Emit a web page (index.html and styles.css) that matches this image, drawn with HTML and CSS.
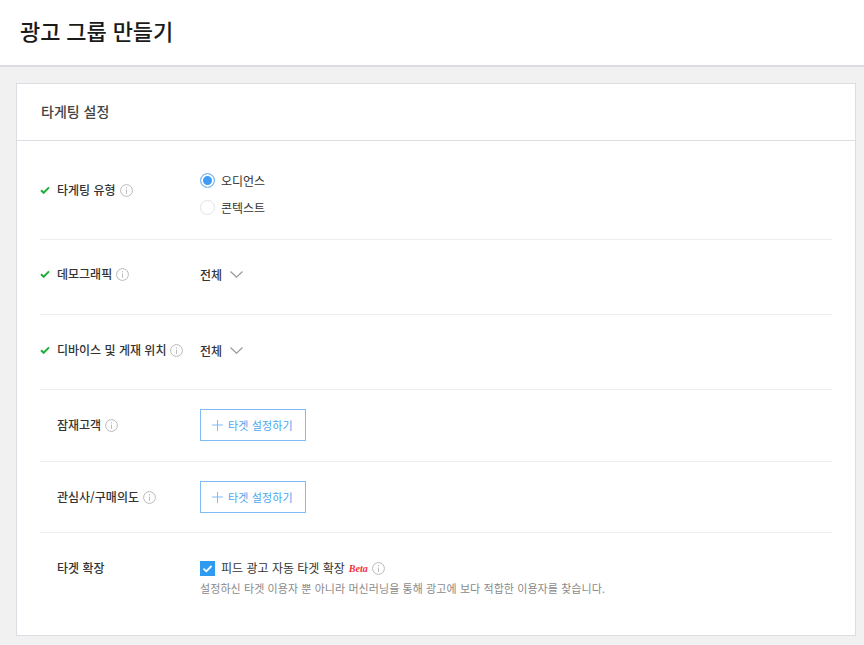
FILE: index.html
```html
<!DOCTYPE html>
<html lang="ko">
<head>
<meta charset="utf-8">
<title>광고 그룹 만들기</title>
<link rel="stylesheet" href="styles.css">
</head>
<body>
<header class="page-head"><h1 class="page-title">광고 그룹 만들기</h1></header>
<main class="content">
  <section class="card">
    <h2 class="card-title">타게팅 설정</h2>
    <div class="rows">
      <div class="row row-type">
        <div class="label">
          <svg class="check" viewBox="0 0 10 8"><path d="M1 4.200 3.700 6.800 9 1.400" /></svg>
          <span>타게팅 유형</span>
          <svg class="info" viewBox="0 0 13 13"><circle cx="6.500" cy="6.500" r="5.900"/><path d="M6.500 5.600v4.200M6.500 3.200v1.200"/></svg>
        </div>
        <div class="value radios">
          <div class="radio-line"><span class="radio on"></span><span>오디언스</span></div>
          <div class="radio-line"><span class="radio"></span><span>콘텍스트</span></div>
        </div>
      </div>
      <div class="row row-demo row-demo-a">
        <div class="label">
          <svg class="check" viewBox="0 0 10 8"><path d="M1 4.200 3.700 6.800 9 1.400" /></svg>
          <span>데모그래픽</span>
          <svg class="info" viewBox="0 0 13 13"><circle cx="6.500" cy="6.500" r="5.900"/><path d="M6.500 5.600v4.200M6.500 3.200v1.200"/></svg>
        </div>
        <div class="value select"><span>전체</span><svg class="chev" viewBox="0 0 13 7"><path d="M.5.5 6.500 6.200 12.500.5"/></svg></div>
      </div>
      <div class="row row-demo">
        <div class="label">
          <svg class="check" viewBox="0 0 10 8"><path d="M1 4.200 3.700 6.800 9 1.400" /></svg>
          <span>디바이스 및 게재 위치</span>
          <svg class="info" viewBox="0 0 13 13"><circle cx="6.500" cy="6.500" r="5.900"/><path d="M6.500 5.600v4.200M6.500 3.200v1.200"/></svg>
        </div>
        <div class="value select"><span>전체</span><svg class="chev" viewBox="0 0 13 7"><path d="M.5.5 6.500 6.200 12.500.5"/></svg></div>
      </div>
      <div class="row row-target">
        <div class="label indent">
          <span>잠재고객</span>
          <svg class="info" viewBox="0 0 13 13"><circle cx="6.500" cy="6.500" r="5.900"/><path d="M6.500 5.600v4.200M6.500 3.200v1.200"/></svg>
        </div>
        <div class="value"><button class="add-btn" type="button"><svg class="plus" viewBox="0 0 11 11"><path d="M5.500 0v11M0 5h11"/></svg>타겟 설정하기</button></div>
      </div>
      <div class="row row-target">
        <div class="label indent">
          <span>관심사/구매의도</span>
          <svg class="info" viewBox="0 0 13 13"><circle cx="6.500" cy="6.500" r="5.900"/><path d="M6.500 5.600v4.200M6.500 3.200v1.200"/></svg>
        </div>
        <div class="value"><button class="add-btn" type="button"><svg class="plus" viewBox="0 0 11 11"><path d="M5.500 0v11M0 5h11"/></svg>타겟 설정하기</button></div>
      </div>
      <div class="row row-expand">
        <div class="label indent"><span>타겟 확장</span></div>
        <div class="value">
          <div class="check-line">
            <span class="checkbox"><svg viewBox="0 0 15 15"><path d="M3.500 7.700 6.300 10.300 11.500 5"/></svg></span>
            <span>피드 광고 자동 타겟 확장</span>
            <span class="beta">Beta</span>
            <svg class="info" viewBox="0 0 13 13"><circle cx="6.500" cy="6.500" r="5.900"/><path d="M6.500 5.600v4.200M6.500 3.200v1.200"/></svg>
          </div>
          <p class="help">설정하신 타겟 이용자 뿐 아니라 머신러닝을 통해 광고에 보다 적합한 이용자를 찾습니다.</p>
        </div>
      </div>
    </div>
  </section>
</main>
</body>
</html>
```
FILE: styles.css
```css
* { box-sizing: border-box; }
html, body { margin: 0; padding: 0; }
body {
  background: #f1f1f1;
  font-family: "Noto Sans CJK KR", "Noto Sans", sans-serif;
  color: #333;
  height: 645px;
  overflow: hidden;
}
.page-head {
  height: 67px;
  background: #fff;
  border-bottom: 2px solid #dcdde2;
  padding: 14px 0 0 20px;
}
.page-title {
  margin: 0;
  font-size: 22px;
  letter-spacing: -0.1px;
  line-height: 32px;
  font-weight: 500;
  color: #1a1a1a;
}
.content { padding: 16px 8px 0 16px; }
.card {
  background: #fff;
  border: 1px solid #dcdde2;
  height: 553px;
}
.card-title {
  margin: 0;
  height: 57px;
  padding: 0 0 0 24px;
  border-bottom: 1px solid #dcdde2;
  font-size: 14px;
  line-height: 55px;
  font-weight: 500;
  color: #444;
}
.rows { padding: 0 23px; }
.row {
  display: flex;
  border-bottom: 1px solid #eeeeee;
  font-size: 12px;
  color: #333;
}
.row-type { height: 99px; padding-top: 29px; }
.row-demo { height: 75px; padding-top: 15px; }
.row-demo-a { padding-top: 14px; }
.row-target { height: 72px; padding-top: 19px; }
.row-target + .row-target { height: 71px; }
.row-expand { border-bottom: 0; padding-top: 25px; }
.label {
  width: 160px;
  display: flex;
  align-items: center;
  height: 40px;
  font-weight: 500;
  line-height: 18px;
}
.row-target .label { height: 32px; }
.row-expand .label { height: 20px; }
.label.indent { padding-left: 17px; }
.check {
  width: 10px;
  height: 8px;
  margin-right: 7px;
  flex: none;
  fill: none;
  stroke: #1fae3c;
  stroke-width: 2;
}
.info {
  width: 13px;
  height: 13px;
  margin-left: 4px;
  flex: none;
  fill: none;
  stroke: #b9b9b9;
  stroke-width: 1;
}
.radio-line {
  display: flex;
  align-items: center;
  gap: 6px;
  height: 27px;
  line-height: 18px;
}
.radios { margin-top: -3px; }
.radio {
  width: 15px;
  height: 15px;
  border-radius: 50%;
  border: 1px solid #e2e2e2;
  background: #fff;
  flex: none;
}
.radio.on {
  border: 1px solid #7fbcf6;
  background: #3f9bf5;
  box-shadow: inset 0 0 0 2px #fff;
}
.select {
  display: flex;
  align-items: center;
  height: 40px;
  gap: 8px;
  font-weight: 500;
}
.chev {
  width: 13px;
  height: 7px;
  margin-top: 1px;
  fill: none;
  stroke: #999;
  stroke-width: 1.2;
}
.add-btn {
  display: flex;
  align-items: center;
  width: 106px;
  height: 32px;
  padding: 0 0 0 11px;
  background: #fff;
  border: 1px solid #7dbcf6;
  color: #4aa5f0;
  font: inherit;
  font-size: 11px;
  letter-spacing: 0.15px;
}
.plus {
  width: 11px;
  height: 11px;
  margin-right: 5px;
  fill: none;
  stroke: #7dbcf6;
  stroke-width: 1;
}
.check-line {
  display: flex;
  align-items: center;
  height: 20px;
  line-height: 18px;
}
.checkbox {
  width: 15px;
  height: 15px;
  background: #2e9bf0;
  margin-right: 6px;
  flex: none;
  display: block;
}
.checkbox svg {
  display: block;
  width: 15px;
  height: 15px;
  fill: none;
  stroke: #fff;
  stroke-width: 1.8;
}
.beta {
  margin-left: 4px;
  color: #f0303c;
  font: italic 700 10px "Liberation Serif", serif;
}
.help {
  margin: 1px 0 0;
  font-size: 11px;
  letter-spacing: 0.08px;
  line-height: 18px;
  color: #8a8a8a;
}
```
